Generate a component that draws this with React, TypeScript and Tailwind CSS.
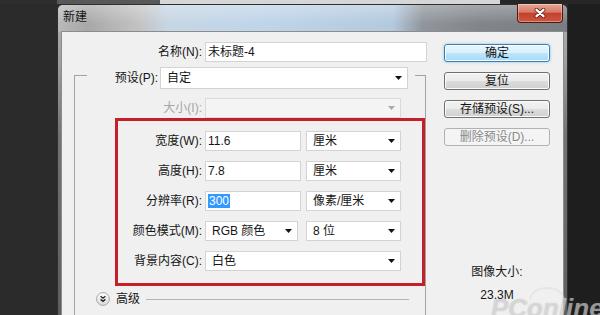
import React from 'react'

const FONT = "font-['Liberation_Sans','Noto_Sans_CJK_SC',sans-serif]"

function Arrow({ muted }: { muted?: boolean }) {
  return (
    <svg width="7" height="4" viewBox="0 0 7 4" className="shrink-0">
      <path d="M0 0H7L3.5 4Z" fill={muted ? '#a9a9a9' : '#111'} />
    </svg>
  )
}

type BoxProps = { className?: string; children?: React.ReactNode }

function TextBox({ className = '', children }: BoxProps) {
  return (
    <div className={`flex h-[20px] shrink-0 items-center border border-[#d3d3d3] bg-white pl-[2px] ${className}`}>
      {children}
    </div>
  )
}

function Combo({ className = '', children, muted, tall }: BoxProps & { muted?: boolean; tall?: boolean }) {
  return (
    <div
      className={`flex shrink-0 items-center justify-between border pl-[6px] pr-[5px] ${tall ? 'h-[22px]' : 'h-[20px]'} ${
        muted ? 'border-[#dadada] bg-[#f4f4f4]' : 'border-[#d3d3d3] bg-white'
      } ${className}`}
    >
      <span>{children}</span>
      <Arrow muted={muted} />
    </div>
  )
}

function Btn({ children, kind = 'normal' }: { children: React.ReactNode; kind?: 'primary' | 'normal' | 'disabled' }) {
  const look =
    kind === 'primary'
      ? 'border-[#3c7fb1] bg-[linear-gradient(180deg,#eaf6fd_0%,#d9f0fc_50%,#bee6fd_50%,#a7d9f5_100%)] shadow-[inset_0_0_0_1px_#ffffff,0_0_3px_#7cc3ee]'
      : kind === 'disabled'
        ? 'border-[#adb2b5] bg-[#f4f4f4] text-[#8a8a8a]'
        : 'border-[#707070] bg-[linear-gradient(180deg,#f2f2f2_0%,#ebebeb_50%,#dddddd_50%,#cfcfcf_100%)] shadow-[inset_0_0_0_1px_#fbfbfb]'
  return (
    <div className={`flex h-[18px] items-center justify-center rounded-[3px] border ${look}`}>{children}</div>
  )
}

function ExpandIcon() {
  return (
    <svg width="14" height="14" viewBox="0 0 14 14" className="shrink-0">
      <defs>
        <linearGradient id="exp" x1="0" y1="0" x2="0" y2="1">
          <stop offset="0" stopColor="#ffffff" />
          <stop offset="1" stopColor="#d9d9d9" />
        </linearGradient>
      </defs>
      <circle cx="7" cy="7" r="6.4" fill="url(#exp)" stroke="#a6a6a6" />
      <path d="M4.6 4.2L7 6.2L9.4 4.2M4.6 7.4L7 9.4L9.4 7.4" fill="none" stroke="#2a2a2a" strokeWidth="1.4" />
    </svg>
  )
}

function CloseX() {
  return (
    <svg width="12" height="10" viewBox="0 0 12 10">
      <path d="M2.5 1.8L9.5 8.2M9.5 1.8L2.5 8.2" stroke="#6a2216" strokeWidth="4" strokeLinecap="round" />
      <path d="M2.5 1.8L9.5 8.2M9.5 1.8L2.5 8.2" stroke="#ffffff" strokeWidth="2.3" strokeLinecap="round" />
    </svg>
  )
}

export default function App() {
  return (
    <div className={`relative flex h-[315px] w-[600px] flex-col overflow-hidden bg-[#2a2a2a] text-[12px] leading-[14px] text-[#151515] ${FONT}`}>
      {/* strip of the app behind the dialog */}
      <div className="flex h-[4px] shrink-0">
        <div className="w-[57px] bg-[#2e2e2e]" />
        <div className="w-[103px] bg-[#585858]" />
        <div className="w-[340px] bg-[#d6d6d6]" />
        <div className="flex-1 bg-[#262626]" />
      </div>

      <div className="flex min-h-0 flex-1">
        <div className="w-[57px] shrink-0 bg-[#2b2b2b]" />

        {/* window */}
        <div className="flex w-[511px] shrink-0 flex-col rounded-t-[6px] border border-b-0 border-[#2f2f2f] bg-[linear-gradient(180deg,#b4b4b4_0px,#9c9c9c_60px,#737373_130px,#5e5e5e_311px)]">
          <div className="flex h-[27px] shrink-0 items-start rounded-t-[5px] bg-[linear-gradient(180deg,rgba(255,255,255,0.28)_0%,rgba(255,255,255,0)_70%),linear-gradient(90deg,#b9b9b9_0px,#a8a8a8_30px,#c2c2c2_80px,#c6d6e4_110px,#c0d5e9_200px,#b3c9de_335px,#8f959b_365px,#81868b_420px,#797d82_509px)]">
            <span className="pl-[5px] pt-[5px]">新建</span>
            <div className="mr-[4px] ml-auto -mt-[1px] flex h-[19px] w-[46px] items-center justify-center rounded-b-[4px] border border-t-0 border-[#4d1a12] bg-[linear-gradient(180deg,#e8a797_0%,#d77a69_45%,#c3412b_52%,#d0563f_100%)] shadow-[inset_0_0_0_1px_rgba(255,255,255,0.35)]">
              <CloseX />
            </div>
          </div>

          {/* client area */}
          <div className="ml-[4px] flex w-[501px] flex-1 bg-[#f0f0f0] shadow-[0_0_0_1px_#8c8c8c]">
            <div className="flex w-[365px] shrink-0 flex-col pt-[10px]">
              <div className="flex items-center">
                <span className="mr-[3px] w-[140px] shrink-0 text-right">名称(N):</span>
                <TextBox className="w-[222px]">未标题-4</TextBox>
              </div>

              {/* group box */}
              <div className="mt-[13px] ml-[12px] flex w-[352px] flex-1 flex-col border-x border-[#a3a3a3]">
                <div className="-mt-[8px] flex h-[22px] items-center">
                  <div className="w-[12px] shrink-0 self-start mt-[8px] border-t border-[#a3a3a3]" />
                  <span className="mr-[2px] w-[71px] shrink-0 text-right">预设(P):</span>
                  <Combo tall className="w-[248px]">自定</Combo>
                  <div className="ml-[7px] flex-1 self-start mt-[8px] border-t border-[#a3a3a3]" />
                </div>

                <div className="mt-[9px] flex items-center">
                  <span className="mr-[3px] w-[127px] shrink-0 text-right text-[#a5a5a5]">大小(I):</span>
                  <Combo muted className="w-[196px]"></Combo>
                </div>

                {/* red highlight */}
                <div className="ml-[40px] flex flex-col gap-[10px] border-[3px] border-[#c52029] pt-[10px] pb-[12px]">
                  <div className="flex items-center">
                    <span className="mr-[3px] w-[84px] shrink-0 text-right">宽度(W):</span>
                    <TextBox className="w-[96px]">11.6</TextBox>
                    <Combo className="ml-[5px] w-[95px]">厘米</Combo>
                  </div>
                  <div className="flex items-center">
                    <span className="mr-[3px] w-[84px] shrink-0 text-right">高度(H):</span>
                    <TextBox className="w-[96px]">7.8</TextBox>
                    <Combo className="ml-[5px] w-[95px]">厘米</Combo>
                  </div>
                  <div className="flex items-center">
                    <span className="mr-[3px] w-[84px] shrink-0 text-right">分辨率(R):</span>
                    <TextBox className="w-[96px]">
                      <span className="bg-[#3399ff] px-[1px] text-white">300</span>
                    </TextBox>
                    <Combo className="ml-[5px] w-[95px]">像素/厘米</Combo>
                  </div>
                  <div className="flex items-center">
                    <span className="mr-[3px] w-[84px] shrink-0 text-right">颜色模式(M):</span>
                    <Combo className="w-[93px]">RGB 颜色</Combo>
                    <Combo className="ml-[8px] w-[95px]">8 位</Combo>
                  </div>
                  <div className="flex items-center">
                    <span className="mr-[3px] w-[84px] shrink-0 text-right">背景内容(C):</span>
                    <Combo className="w-[196px]">白色</Combo>
                  </div>
                </div>

                <div className="mt-[6px] flex h-[14px] items-center">
                  <div className="ml-[21px]">
                    <ExpandIcon />
                  </div>
                  <span className="ml-[6px]">高级</span>
                  <div className="mr-[16px] ml-[6px] flex-1 border-t border-[#b4b4b4]" />
                </div>
              </div>
            </div>

            <div className="ml-[17px] flex w-[106px] shrink-0 flex-col gap-[10px] pt-[12px]">
              <Btn kind="primary">确定</Btn>
              <Btn>复位</Btn>
              <Btn>存储预设(S)...</Btn>
              <Btn kind="disabled">删除预设(D)...</Btn>
              <div className="mt-[109px] flex flex-col items-center gap-[9px]">
                <span>图像大小:</span>
                <span>23.3M</span>
              </div>
            </div>
          </div>
        </div>

        <div className="flex-1 bg-[#1e1e1e]" />
      </div>

      {/* watermark */}
      <div className="pointer-events-none absolute top-[293px] left-[491px] flex items-end">
        <svg width="40" height="14" viewBox="0 0 40 14" className="absolute -top-[6px] left-[36px]">
          <path d="M3 13A17 12 0 0 1 37 13" fill="none" stroke="rgba(215,215,215,0.4)" strokeWidth="2" />
        </svg>
        <span className="text-[26px] leading-[30px] font-bold italic text-[rgba(255,255,255,0.45)] [text-shadow:0_0_1px_rgba(120,120,120,0.5)]">
          PConline
        </span>
        <span className="mb-[8px] ml-[1px] text-[8px] leading-[8px] text-[rgba(200,200,200,0.45)]">.com.cn</span>
      </div>
    </div>
  )
}
